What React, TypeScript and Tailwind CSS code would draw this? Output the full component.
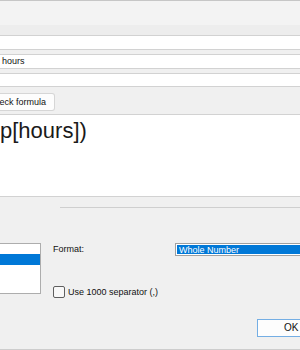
import React from 'react';

const Field: React.FC<{ text?: string; h: string }> = ({ text, h }) => (
  <div className={`${h} bg-white border-y border-[#d2d2d2] flex items-center pl-[2px] text-[#111] leading-none`}>
    {text}
  </div>
);

const App: React.FC = () => {
  return (
    <div className="w-[300px] h-[350px] overflow-hidden bg-[#f0f0f0] font-['Liberation_Sans',Arial,sans-serif] text-[9px] text-[#111] flex flex-col">
      {/* title strip */}
      <div className="border-t border-[#c6c6c6] h-[25px] bg-[#f3f3f3]" />
      <div className="h-[10px] bg-[#ededed]" />

      {/* input fields */}
      <Field h="h-[15px]" />
      <div className="h-[4px]" />
      <Field h="h-[15px]" text="hours" />
      <div className="h-[4px]" />
      <Field h="h-[14px]" />

      {/* check formula row */}
      <div className="h-[27px] pt-[6px]">
        <div className="w-[55px] h-[18px] bg-[#fdfdfd] border border-l-0 border-[#d6d6d6] rounded-r-[3px] flex items-center justify-end pr-[8px] leading-none whitespace-nowrap">
          eck formula
        </div>
      </div>

      {/* formula editor */}
      <div className="h-[83px] bg-white border-y border-[#d2d2d2] pt-[3px]">
        <div className="text-[22px] leading-[25px] text-[#1a1a1a] whitespace-nowrap">p[hours])</div>
      </div>

      {/* separator */}
      <div className="h-[10px]" />
      <div className="ml-[60px] h-[1px] bg-[#cfcfcf]" />

      {/* formatting */}
      <div className="mt-[35px] flex">
        <div className="w-[41px] h-[51px] shrink-0 bg-white border border-l-0 border-[#adadad] pt-[10px]">
          <div className="h-[11px] bg-[#0078d7]" />
        </div>
        <div className="ml-[12px] shrink-0 flex flex-col">
          <div className="flex items-center h-[13px]">
            <div className="w-[122px] shrink-0 leading-none">Format:</div>
            <div className="w-[130px] h-[13px] shrink-0 border border-[#a0a0a0] bg-white p-[1px]">
              <div className="h-full bg-[#0078d7] text-white leading-[10px] pl-[2px] whitespace-nowrap">Whole Number</div>
            </div>
          </div>
          <div className="mt-[30px] flex items-center gap-[3px]">
            <div className="w-[12px] h-[12px] shrink-0 rounded-[2px] border border-[#5f5f5f] bg-[#f8f8f8]" />
            <span className="leading-none whitespace-nowrap">Use 1000 separator (,)</span>
          </div>
        </div>
      </div>

      {/* buttons */}
      <div className="mt-[21px] flex pl-[257px]">
        <div className="w-[64px] h-[18px] shrink-0 bg-[#fdfdfd] border border-[#74aee4] flex items-center pl-[26px] leading-none text-[10px]">
          OK
        </div>
      </div>
      <div className="mt-[12px] border-t border-[#cdcdcd] flex-1 bg-[#f0f0f0]" />
    </div>
  );
};

export default App;
